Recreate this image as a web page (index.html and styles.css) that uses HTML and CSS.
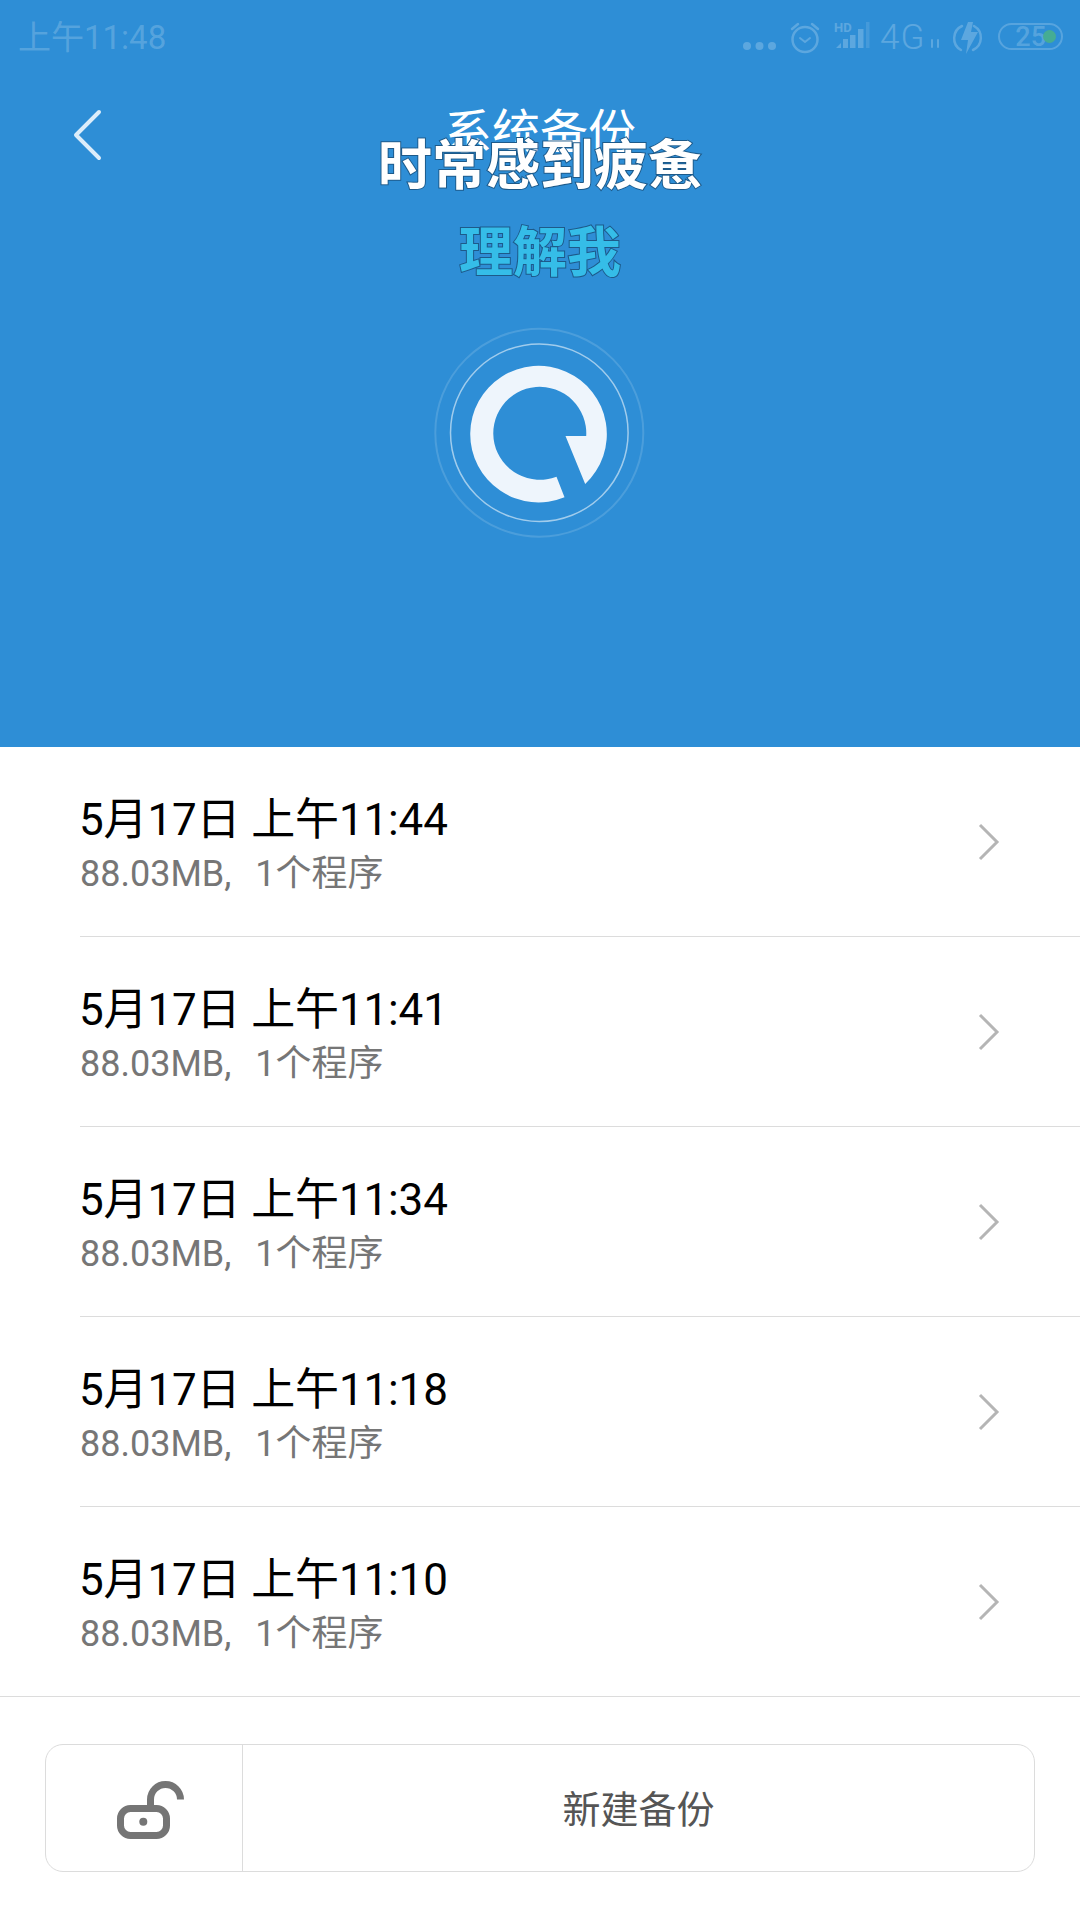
FILE: index.html
```html
<!DOCTYPE html>
<html lang="zh-CN">

<head>
  <meta charset="utf8">
  <meta name="viewport" content="width=device-width, initial-scale=1.0">
  <title>系统备份</title>
  <link rel="stylesheet" href="styles.css">
</head>

<body>
  <header class="hero">
    <div class="status">
      <span class="clock">上午11:48</span>
      <div class="status-right">
        <svg class="status-icons" width="250" height="60" viewBox="740 0 250 60">
          <g fill="#fff">
            <circle cx="747" cy="46" r="4" />
            <circle cx="759.500" cy="46" r="4" />
            <circle cx="772" cy="46" r="4" />
            <text class="hd" x="834" y="32">HD</text>
            <path d="M836 48l5-5v5zM843 48v-9h5v9zM850 48V35h5.500v13zM858 48V29h5.500v19z" />
            <rect x="866" y="22" width="3.500" height="26" opacity=".5" />
            <text class="net" x="880" y="49">4G</text>
            <path d="M968 22h5l-2 10h7l-12 22 2-14h-7z" />
          </g>
          <g fill="none" stroke="#fff" stroke-width="2.500" stroke-linecap="round">
            <circle cx="805" cy="39.500" r="12.500" />
            <path d="M792 29l6-5M818 29l-6-5" />
            <path d="M800 38l5 4 5-4" stroke-width="2" />
            <path d="M932 40v7M938 47v-7" stroke-width="2" />
            <path d="M962 26a13.500 13.500 0 0 0-1 24M973 50a13.500 13.500 0 0 0 1-24" />
          </g>
        </svg>
        <div class="battery"><span>25</span><i class="battery-dot"></i></div>
      </div>
    </div>

    <div class="nav">
      <svg class="back" width="30" height="52" viewBox="0 0 30 52">
        <path d="M26 3L3 26l23 23" fill="none" stroke="#dcedfa" stroke-width="4" stroke-linecap="round" stroke-linejoin="round" />
      </svg>
      <h1>系统备份</h1>
    </div>

    <svg class="logo" width="260" height="240" viewBox="0 0 260 240">
      <circle cx="129.300" cy="122.700" r="104" fill="none" stroke="#fff" stroke-opacity=".14" stroke-width="2" />
      <circle cx="129.300" cy="122.700" r="88.800" fill="none" stroke="#fff" stroke-opacity=".55" stroke-width="1.500" />
      <path d="M154.500 187.300L146.500 166.700A46.500 46.500 0 1 1 176.200 126L155.500 126L175.200 174A68.300 68.300 0 1 0 154.500 187.300Z" fill="#eef5fc" />
    </svg>

    <div class="slogan">
      <p class="slogan-main">时常感到疲惫</p>
      <p class="slogan-sub">理解我</p>
    </div>
  </header>

  <ul class="backups">
    <li class="row">
      <div>
        <div class="row-title">5月17日 上午11:44</div>
        <div class="row-sub">88.03MB, 1个程序</div>
      </div>
      <svg class="chevron" width="24" height="40" viewBox="0 0 24 40"><path d="M2 3l17 17L2 37" /></svg>
    </li>
    <li class="row">
      <div>
        <div class="row-title">5月17日 上午11:41</div>
        <div class="row-sub">88.03MB, 1个程序</div>
      </div>
      <svg class="chevron" width="24" height="40" viewBox="0 0 24 40"><path d="M2 3l17 17L2 37" /></svg>
    </li>
    <li class="row">
      <div>
        <div class="row-title">5月17日 上午11:34</div>
        <div class="row-sub">88.03MB, 1个程序</div>
      </div>
      <svg class="chevron" width="24" height="40" viewBox="0 0 24 40"><path d="M2 3l17 17L2 37" /></svg>
    </li>
    <li class="row">
      <div>
        <div class="row-title">5月17日 上午11:18</div>
        <div class="row-sub">88.03MB, 1个程序</div>
      </div>
      <svg class="chevron" width="24" height="40" viewBox="0 0 24 40"><path d="M2 3l17 17L2 37" /></svg>
    </li>
    <li class="row">
      <div>
        <div class="row-title">5月17日 上午11:10</div>
        <div class="row-sub">88.03MB, 1个程序</div>
      </div>
      <svg class="chevron" width="24" height="40" viewBox="0 0 24 40"><path d="M2 3l17 17L2 37" /></svg>
    </li>
  </ul>

  <footer class="actions">
    <div class="action-bar">
      <div class="lock">
        <svg width="67" height="58" viewBox="0 0 67 58">
          <rect x="3.500" y="27.500" width="46" height="27" rx="10" fill="none" stroke="#757575" stroke-width="7" />
          <circle cx="26.300" cy="40.700" r="4" fill="#757575" />
          <path d="M33.500 27V18.500a15 15 0 0 1 30 0" fill="none" stroke="#757575" stroke-width="7" />
        </svg>
      </div>
      <div class="new-backup">新建备份</div>
    </div>
  </footer>
</body>

</html>
```

FILE: styles.css
```css
html,
body {
  margin: 0;
  height: 100%;
}

body {
  background: #fff;
  font-family: Roboto, 'Noto Sans CJK SC', sans-serif;
}

.hero {
  position: relative;
  height: 747px;
  background: #2e8ed6;
  display: flex;
  flex-direction: column;
}

.status {
  height: 72px;
  padding: 0 17px 0 18px;
  display: flex;
  justify-content: space-between;
  color: rgba(255, 255, 255, 0.2);
}

.clock {
  font-size: 33px;
  line-height: 76px;
}

.status-right {
  display: flex;
  gap: 8px;
}

.status-icons {
  opacity: 0.22;
}

.hd {
  font-size: 13px;
  font-weight: 700;
}

.net {
  font-size: 35px;
  font-weight: 300;
  letter-spacing: 1px;
}

.battery {
  width: 65px;
  height: 27px;
  margin-top: 23px;
  box-sizing: border-box;
  border: 2.5px solid rgba(255, 255, 255, 0.2);
  border-radius: 14px;
  display: flex;
  align-items: center;
  justify-content: flex-end;
  padding: 2px 5px 0 0;
  font-size: 27px;
  font-weight: 500;
  line-height: 1;
}

.battery-dot {
  width: 13px;
  height: 13px;
  margin: -2px 0 0 -3px;
  border-radius: 50%;
  background: #45ac93;
}

.nav {
  height: 126px;
  padding-left: 73px;
  position: relative;
  display: flex;
  align-items: center;
}

.nav h1 {
  position: absolute;
  top: 21px;
  left: 0;
  right: 0;
  margin: 0;
  text-align: center;
  font-size: 48px;
  line-height: 70px;
  font-weight: 400;
  color: #fff;
  font-family: 'Noto Sans CJK SC', sans-serif;
}

.logo {
  margin-top: 112px;
  align-self: center;
}

/* pasted over the title bar */
.slogan {
  position: absolute;
  top: 135px;
  left: 0;
  right: 0;
  text-align: center;
  font-family: 'Noto Sans CJK SC', sans-serif;
  font-size: 54px;
  font-weight: 700;
  line-height: 54px;
  paint-order: stroke fill;
  -webkit-text-stroke: 2px #1d5a8a;
}

.slogan p {
  margin: 0;
}

.slogan-main {
  color: #fff;
}

.slogan-sub {
  margin-top: 33px !important;
  color: #35bde8;
}

.backups {
  margin: 0;
  padding: 0;
  list-style: none;
}

.row {
  height: 190px;
  box-sizing: border-box;
  margin-left: 80px;
  padding: 46px 78px 0 0;
  display: flex;
  justify-content: space-between;
  border-bottom: 1px solid #dcdcdc;
}

.row:last-child {
  margin-left: 0;
  padding-left: 80px;
}

.row-title {
  margin-left: -1px;
  font-size: 44px;
  line-height: 54px;
  letter-spacing: -0.15px;
  color: #000;
}

.row-sub {
  margin-top: 1px;
  font-size: 36px;
  line-height: 53px;
  word-spacing: 15px;
  color: #767676;
}

.chevron {
  margin-top: 29px;
  fill: none;
  stroke: #b5b5b5;
  stroke-width: 3;
}

.actions {
  padding: 47px 45px 0;
}

.action-bar {
  height: 128px;
  box-sizing: border-box;
  border: 1px solid #dcdcdc;
  border-radius: 18px;
  display: flex;
}

.lock {
  width: 197px;
  box-sizing: border-box;
  padding: 3px 0 0 12px;
  border-right: 1px solid #dcdcdc;
  display: flex;
  align-items: center;
  justify-content: center;
}

.new-backup {
  flex: 1;
  padding-bottom: 3px;
  display: flex;
  align-items: center;
  justify-content: center;
  font-family: 'Noto Sans CJK SC', sans-serif;
  font-size: 38px;
  color: #555;
}
```
